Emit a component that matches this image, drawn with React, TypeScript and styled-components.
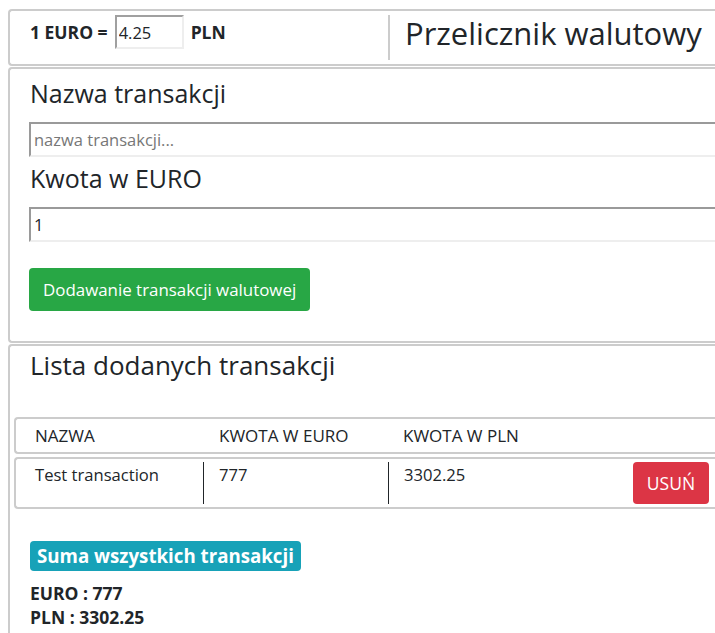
import React, { useState } from 'react';
import styled, { createGlobalStyle } from 'styled-components';

type Transaction = {
  id: number;
  name: string;
  euro: number;
};

const GlobalStyle = createGlobalStyle`
  html {
    overflow: hidden;
  }
  body {
    margin: 8px 0 0 8px;
    font-family: "Open Sans", "Noto Sans", sans-serif;
    color: #212529;
    background: #fff;
  }
`;

const App = () => {
  const [rate, setRate] = useState('4.25');
  const [name, setName] = useState('');
  const [amount, setAmount] = useState('1');
  const [transactions, setTransactions] = useState<Transaction[]>([
    { id: 1, name: 'Test transaction', euro: 777 },
  ]);

  const rateValue = parseFloat(rate) || 0;
  const toPln = (euro: number) => Math.round(euro * rateValue * 100) / 100;
  const sumEuro = transactions.reduce((acc, t) => acc + t.euro, 0);
  const sumPln = Math.round(sumEuro * rateValue * 100) / 100;

  const handleAdd = () => {
    const euro = parseFloat(amount);
    if (!name || Number.isNaN(euro)) return;
    setTransactions([...transactions, { id: Date.now(), name, euro }]);
    setName('');
  };

  const handleRemove = (id: number) => {
    setTransactions(transactions.filter((t) => t.id !== id));
  };

  return (
    <Page>
      <GlobalStyle />
      <HeaderCard>
        <RateBox>
          <RateLabel>1 EURO =</RateLabel>
          <RateInput value={rate} onChange={(e) => setRate(e.target.value)} />
          <RateLabel>PLN</RateLabel>
        </RateBox>
        <TitleBox>
          <Title>Przelicznik walutowy</Title>
        </TitleBox>
      </HeaderCard>

      <FormCard>
        <FieldLabel>Nazwa transakcji</FieldLabel>
        <TextInput
          placeholder="nazwa transakcji..."
          value={name}
          onChange={(e) => setName(e.target.value)}
        />
        <FieldLabel>Kwota w EURO</FieldLabel>
        <TextInput value={amount} onChange={(e) => setAmount(e.target.value)} />
        <AddButton onClick={handleAdd}>Dodawanie transakcji walutowej</AddButton>
      </FormCard>

      <ListCard>
        <ListTitle>Lista dodanych transakcji</ListTitle>
        <TableHead>
          <HeadCell>NAZWA</HeadCell>
          <HeadCell>KWOTA W EURO</HeadCell>
          <HeadCell>KWOTA W PLN</HeadCell>
        </TableHead>
        {transactions.map((t) => (
          <TableRow key={t.id}>
            <Cell $divider>{t.name}</Cell>
            <Cell $divider>{t.euro}</Cell>
            <Cell>{toPln(t.euro)}</Cell>
            <RemoveButton onClick={() => handleRemove(t.id)}>USUŃ</RemoveButton>
          </TableRow>
        ))}
        <Summary>
          <Badge>Suma wszystkich transakcji</Badge>
          <SumLine>EURO : {sumEuro}</SumLine>
          <SumLine>PLN : {sumPln}</SumLine>
        </Summary>
      </ListCard>
    </Page>
  );
};

const Page = styled.div`
  width: 100%;
`;

const Card = styled.section`
  border: 2px solid #ccc;
  border-right: none;
  border-radius: 4px 0 0 4px;
  margin-top: 1px;
`;

const HeaderCard = styled(Card)`
  display: flex;
  align-items: flex-start;
  padding: 4px 0 4px 20px;
`;

const RateBox = styled.div`
  width: 358px;
  display: flex;
  align-items: center;
  height: 34px;
`;

const RateLabel = styled.span`
  font-size: 17.5px;
  font-weight: 700;
  margin: 0 7px 0 0;
  & + input + & {
    margin: 0 0 0 7px;
  }
`;

const RateInput = styled.input`
  box-sizing: border-box;
  width: 69px;
  height: 34px;
  padding: 0 2px;
  border-style: solid;
  border-width: 2px;
  border-color: #a0a0a0 #eee #eee #a0a0a0;
  font-family: inherit;
  font-size: 16.5px;
  color: #212529;
  outline: none;
`;

const TitleBox = styled.div`
  border-left: 2px solid #ccc;
  height: 45px;
  padding-left: 15px;
  display: flex;
  align-items: flex-start;
`;

const Title = styled.h1`
  margin: 0;
  padding-top: 3px;
  font-size: 31px;
  font-weight: 400;
  line-height: 1;
  white-space: nowrap;
`;

const FormCard = styled(Card)`
  padding: 7px 0 30px 19px;
`;

const FieldLabel = styled.label`
  display: block;
  font-size: 25px;
  font-weight: 400;
  line-height: 34px;
  margin: 0 0 12px 1px;
`;

const TextInput = styled.input`
  display: block;
  box-sizing: border-box;
  width: 100%;
  height: 35px;
  padding: 0 3px;
  margin-bottom: 4px;
  border-style: solid;
  border-width: 2px;
  border-color: #9a9a9a #eee #eee #9a9a9a;
  border-right: none;
  font-family: inherit;
  font-size: 16.5px;
  color: #212529;
  outline: none;
  &::placeholder {
    color: #777;
  }
`;

const AddButton = styled.button`
  margin-top: 22px;
  height: 43px;
  padding: 0 14px;
  border: none;
  border-radius: 4px;
  background: #28a745;
  color: #fff;
  font-family: inherit;
  font-size: 16.9px;
  cursor: pointer;
`;

const ListCard = styled(Card)`
  padding: 1px 0 40px 4px;
  border-bottom: none;
`;

const ListTitle = styled.h2`
  margin: 0 0 34px 16px;
  font-size: 26px;
  font-weight: 400;
  line-height: 36px;
`;

const TableHead = styled.div`
  display: flex;
  align-items: center;
  height: 33px;
  padding-left: 3px;
  border: 2px solid #ccc;
  border-right: none;
  border-radius: 4px 0 0 4px;
  margin-bottom: 3px;
`;

const HeadCell = styled.div`
  box-sizing: border-box;
  width: 184px;
  padding-left: 16px;
  font-size: 17px;
`;

const TableRow = styled.div`
  display: flex;
  align-items: flex-start;
  padding: 3px 0 3px 3px;
  border: 2px solid #ccc;
  border-right: none;
  border-radius: 4px 0 0 4px;
`;

const Cell = styled.div<{ $divider?: boolean }>`
  box-sizing: border-box;
  width: ${(p) => (p.$divider ? '185px' : '184px')};
  height: 42px;
  padding: 1px 16px 0;
  font-size: 16.6px;
  border-right: ${(p) => (p.$divider ? '1px solid #212529' : 'none')};
  & + & {
    padding-left: 15px;
  }
`;

const RemoveButton = styled.button`
  margin-left: 60px;
  width: 76px;
  height: 42px;
  border: none;
  border-radius: 4px;
  background: #dc3545;
  color: #fff;
  font-family: inherit;
  font-size: 17.5px;
  cursor: pointer;
`;

const Summary = styled.div`
  padding: 32px 0 0 16px;
`;

const Badge = styled.div`
  width: fit-content;
  padding: 0 7px;
  height: 30px;
  line-height: 30px;
  border-radius: 4px;
  background: #17a2b8;
  color: #fff;
  font-size: 18.7px;
  font-weight: 700;
  margin-bottom: 10px;
`;

const SumLine = styled.div`
  font-size: 17.5px;
  font-weight: 700;
  line-height: 24px;
`;

export default App;
